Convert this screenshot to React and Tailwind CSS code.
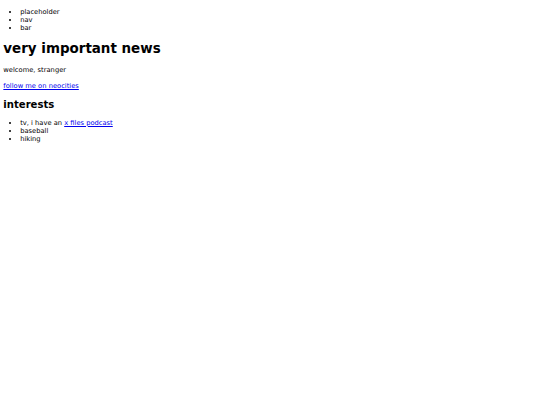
export default function App() {
  return (
    <div className="min-h-[405px] bg-white px-[3.36px] text-black text-[6.72px] leading-[1.215]" style={{ fontFamily: '"DejaVu Sans", Verdana, sans-serif' }}>
      <div className="h-px -mb-px"></div>
      <ul className="list-disc pl-[16.8px] mt-[7.5px] mb-[6.72px]">
        <li>placeholder</li>
        <li>nav</li>
        <li>bar</li>
      </ul>
      <h1 className="text-[13.44px] font-bold my-[9px]">very important news</h1>
      <p className="my-[7.5px]">welcome, stranger</p>
      <p className="my-[7.5px]">
        <a href="#" className="text-[#0000ee] underline">follow me on neocities</a>
      </p>
      <h2 className="text-[10.08px] font-bold mt-[8.6px] mb-[7.6px]">interests</h2>
      <ul className="list-disc pl-[16.8px] mt-[7.6px] mb-[8.6px]">
        <li>
          tv, i have an <a href="#" className="text-[#0000ee] underline">x files podcast</a>
        </li>
        <li>baseball</li>
        <li>hiking</li>
      </ul>
    </div>
  );
}
